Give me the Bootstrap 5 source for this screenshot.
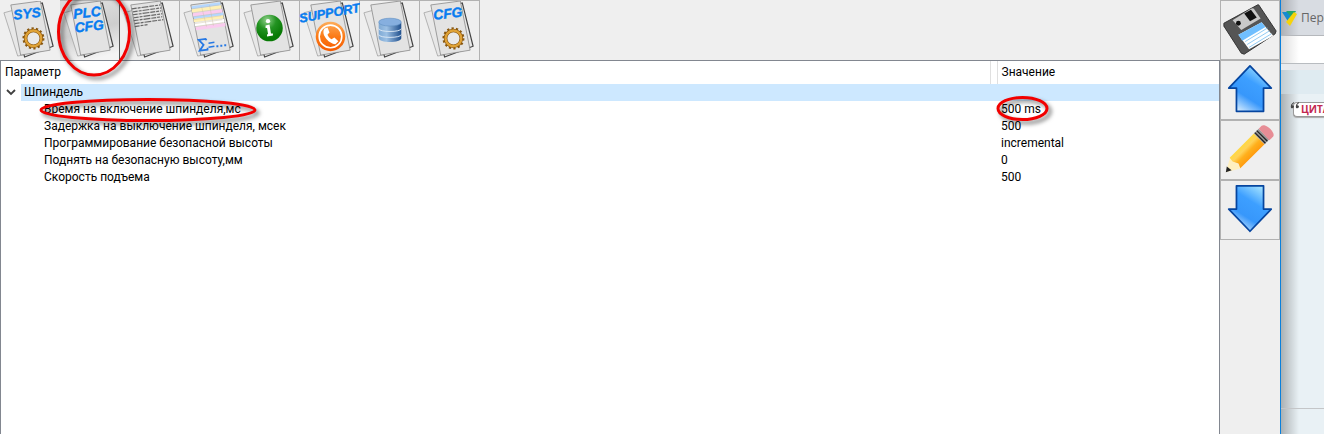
<!DOCTYPE html>
<html lang="ru">
<head>
<meta charset="utf-8">
<meta name="viewport" content="width=device-width, initial-scale=1">
<title>PLC CFG</title>
<link href="https://cdn.jsdelivr.net/npm/bootstrap@5.3.0/dist/css/bootstrap.min.css" rel="stylesheet">
<style>
body { font: 12px/17px Roboto, "Noto Sans", sans-serif; color: #000; background: #efefef; }
.tool { width: 60px; height: 60px; background: #efefef; border: 0 solid #b2b2b2; border-width: 1px 1px 0 0; border-radius: 0; }
.tool .pic { display: block; width: 100%; height: 100%; overflow: visible; }
.tool.active { background: linear-gradient(165deg, #dadada 20%, #cecece 50%, #f4f4f4 90%); border-color: #b2b2b2; border-right-color: #555; }
.side { width: 61px; border-right: 1px solid #0a80dc; }
.side .tool { border-width: 1px; }
.pane { background: #fff; border: 1px solid #828790; border-bottom: 0; }
.params { table-layout: fixed; color: #000; margin: 0; }
.params th, .params td { padding: 0; font-weight: 400; height: 17px; white-space: nowrap; }
.params thead th { height: 23px; padding-left: 4px; }
.params .val { width: 222px; padding-left: 4px; }
.params thead .val { border-left: 1px solid #e0e0e0; padding-left: 4px; }
.params .divider { width: 7px; padding: 0; }
.params thead .divider { border-left: 1px solid #e0e0e0; }
.params tbody .leaf { padding-left: 43px; }
.fold { width: 20px; height: 17px; }
.group-name { background: #cde8ff; padding-left: 3px; }
.group-fill { background: #cde8ff; }
.ring { position: absolute; fill: none; stroke: #f20000; stroke-width: 3; overflow: visible; pointer-events: none; filter: drop-shadow(3px 3px 2px #0008); z-index: 2; }
.ring-tool { left: -3px; top: -14px; width: 74px; height: 90px; }
.ring-name { left: 38px; top: -3px; width: 218px; height: 24px; }
.ring-val { left: -1px; top: -5px; width: 53px; height: 25px; }
.behind { width: 43px; background: linear-gradient(90deg, #0004, #0000 18px) #e9f1f5; }
.tabbar { height: 36px; border-bottom: 1px solid #b5b8bc; background: linear-gradient(90deg, #0003, #0000 18px) #d8dce2; color: #666; font: 12px "Open Sans", sans-serif; }
.address { height: 28px; background: linear-gradient(90deg, #0002, #0000 18px) #fff; border-bottom: 1px solid #b8bcc0; }
.strip { height: 30px; background: linear-gradient(90deg, #0002, #0000 18px) #dfebf1; border-top: 6px solid #e8eaed; }
.quote { font: bold 10px/13px "Open Sans", sans-serif; color: #c22850; text-decoration: none; white-space: nowrap; background: #fff; border: 1px solid #999; border-right: 0; border-radius: 4px 0 0 4px; box-shadow: 0 1px 1px #aaa; padding-left: 7px; margin-left: 12px; }
.post-end { height: 26px; border-top: 1px solid #c4c6c8; }
.word { font: italic bold 14px "Liberation Sans", sans-serif; fill: #087cf0; stroke: #087cf0; stroke-width: .4; }
.word-long { font-size: 13px; }
</style>
</head>
<body>
<svg width="0" height="0" class="position-absolute" aria-hidden="true">
  <defs>
    <linearGradient id="blueFill" x1=".15" y1="1" x2=".75" y2="0"><stop offset="0" stop-color="#e8f6ff"/><stop offset=".35" stop-color="#3797fb"/><stop offset=".65" stop-color="#3d9fff"/><stop offset="1" stop-color="#a6e4ff"/></linearGradient>
    <linearGradient id="orange" x2="0" y2="1"><stop stop-color="#fdad5c"/><stop offset=".5" stop-color="#fb7b18"/><stop offset="1" stop-color="#f65a00"/></linearGradient>
    <radialGradient id="green" cx=".4" cy=".2" r=".7"><stop stop-color="#8fd08a"/><stop offset=".5" stop-color="#239322"/><stop offset="1" stop-color="#087a05"/></radialGradient>
    <linearGradient id="steel"><stop stop-color="#7ea9d4"/><stop offset=".35" stop-color="#9cc0e4"/><stop offset="1" stop-color="#1f4f8d"/></linearGradient>
    <linearGradient id="wood" x1=".2" y1=".2" x2=".8" y2=".8"><stop stop-color="#ffe21f"/><stop offset=".4" stop-color="#ffd257"/><stop offset=".55" stop-color="#ffb01c"/><stop offset="1" stop-color="#ff8200"/></linearGradient>
    <symbol id="sheets" viewBox="0 0 60 60">
      <path d="M4 12 33 4 47 50 18 56Z" fill="#e8e8e8" stroke="#999" stroke-width=".7"/>
      <path d="M14 10 43 2 54 46 25 57Z" fill="#e8e8e8" stroke="#444" stroke-width="1.200"/>
      <path d="M11 4 41 0 51 50 21 55Z" fill="#e3e3e3" stroke="#888" stroke-width=".8"/>
    </symbol>
    <symbol id="gear" viewBox="0 0 24 24">
      <circle cx="12" cy="12" r="9.700" fill="none" stroke="#8a5a12" stroke-width="3" stroke-dasharray="2.200 2.150"/>
      <circle cx="12" cy="12" r="8" fill="#e9e9e9" stroke="#84500b" stroke-width="3.600"/>
      <circle cx="12" cy="12" r="8" fill="none" stroke="#dfa236" stroke-width="2.400"/>
    </symbol>
  </defs>
</svg>

<div class="d-flex vh-100 overflow-hidden">
  <main class="d-flex flex-column flex-grow-1">
    <nav class="d-flex" aria-label="Разделы">
      <button class="tool btn p-0" aria-label="SYS"><svg class="pic" viewBox="0 0 60 60"><use href="#sheets"/><text class="word" x="14" y="19" transform="rotate(-6 14 19)">SYS</text><use href="#gear" x="22" y="26" width="24" height="24"/></svg></button>
      <button class="tool btn p-0 active position-relative" aria-label="PLC CFG"><svg class="pic" viewBox="0 0 60 60"><use href="#sheets"/><g class="word" transform="rotate(-6 14 18)"><text x="14" y="18">PLC</text><text x="14" y="32">CFG</text></g></svg>
        <svg class="ring ring-tool" viewBox="0 0 74 90"><ellipse cx="37" cy="45" rx="35.500" ry="43"/></svg></button>
      <button class="tool btn p-0" aria-label="Журнал"><svg class="pic" viewBox="0 0 60 60"><use href="#sheets"/><g fill="none" stroke="#686868" stroke-width="1.200" stroke-dasharray="5 1 3 1 7 1"><path d="m12 8 29-4M13 11l29-4M13 14l29-4M14 17l29-4M14 20l29-4M15 23l29-4M15 26l13-2"/></g></svg></button>
      <button class="tool btn p-0" aria-label="Сумма"><svg class="pic" viewBox="0 0 60 60"><use href="#sheets"/><g stroke-width="3.300"><path d="m12 7 29-4M14 17l30-4" stroke="#b4d7ff"/><path d="m12 10 30-4M14 20l30-4" stroke="#fff0b5"/><path d="m13 14 30-4M16 28l30-4" stroke="#facbef"/><path d="m15 24 30-4" stroke="#fff"/></g><path d="m22 6 5 20m3-22 4 21M12 8l28-4M13 12l28-4M14 16l28-4M14 19l28-4M15 23l28-4M16 26l28-4" fill="none" stroke="#c9b9a0" stroke-width=".4"/><g fill="none" stroke="#2779e4"><path d="m27 40-1-1.500-7 1 5 5-4 6 8-1 0-2" stroke-width="1.800"/><path d="m29 43 6-1m-6 5 6-1" stroke-width="1.600"/><path d="m37 46 2 0m2-.5 2 0m2-.5 2 0" stroke-width="2"/></g></svg></button>
      <button class="tool btn p-0" aria-label="Информация"><svg class="pic" viewBox="0 0 60 60"><use href="#sheets"/><circle cx="30" cy="27.500" r="13.500" fill="url(#green)"/><circle cx="28.500" cy="20.500" r="2.200" fill="#fff"/><path d="m26 25 4-1 1.500 9 2 0v2l-6 1v-2l1-.5-1-6-1.500 0Z" fill="#fff"/></svg></button>
      <button class="tool btn p-0" aria-label="SUPPORT"><svg class="pic" viewBox="0 0 60 60"><use href="#sheets"/><circle cx="31" cy="36" r="15" fill="url(#orange)"/><circle cx="31" cy="36" r="11.500" fill="none" stroke="#fff" stroke-width="1.600"/><path d="M25 28c-4 5 3 15 11 16l3-3-4-4-3 2c-2-1-4-4-4-5l2-2-2-5Z" fill="#fff"/><text class="word word-long" x="0" y="22" transform="rotate(-10 0 22)">SUPPORT</text></svg></button>
      <button class="tool btn p-0" aria-label="База данных"><svg class="pic" viewBox="0 0 60 60"><use href="#sheets"/><path d="M19 22v16c0 5 23 5 23 0V22Z" fill="url(#steel)"/><ellipse cx="30.500" cy="21.500" rx="11.500" ry="4" fill="#86afdf" stroke="#5f8fc2" stroke-width=".6"/><path d="M19 28c0 4 23 4 23 0M19 34c0 4 23 4 23 0" fill="none" stroke="#d8e6f3" stroke-width="1"/></svg></button>
      <button class="tool btn p-0" aria-label="CFG"><svg class="pic" viewBox="0 0 60 60"><use href="#sheets"/><text class="word" x="14" y="19" transform="rotate(-6 14 19)">CFG</text><use href="#gear" x="22" y="26" width="24" height="24"/></svg></button>
    </nav>

    <section class="pane flex-grow-1">
      <table class="params w-100">
        <thead><tr><th scope="col">Параметр</th><th class="divider"></th><th class="val" scope="col">Значение</th></tr></thead>
        <tbody>
          <tr><td><div class="d-flex"><svg class="fold" viewBox="0 0 20 17"><path d="m6 6 4 4 4-4" fill="none" stroke="#404040" stroke-width="1.800"/></svg><span class="group-name flex-grow-1">Шпиндель</span></div></td><td class="divider group-fill"></td><td class="val group-fill"></td></tr>
          <tr><td class="leaf position-relative">Время на включение шпинделя,мс<svg class="ring ring-name" viewBox="0 0 218 24"><ellipse cx="109" cy="12" rx="107" ry="10.500"/></svg></td><td></td><td class="val position-relative">500 ms<svg class="ring ring-val" viewBox="0 0 53 25"><ellipse cx="26.500" cy="12.500" rx="24.500" ry="11"/></svg></td></tr>
          <tr><td class="leaf">Задержка на выключение шпинделя, мсек</td><td></td><td class="val">500</td></tr>
          <tr><td class="leaf">Программирование безопасной высоты</td><td></td><td class="val">incremental</td></tr>
          <tr><td class="leaf">Поднять на безопасную высоту,мм</td><td></td><td class="val">0</td></tr>
          <tr><td class="leaf">Скорость подъема</td><td></td><td class="val">500</td></tr>
        </tbody>
      </table>
    </section>
  </main>

  <aside class="side d-flex flex-column flex-shrink-0">
    <button class="tool btn p-0" aria-label="Сохранить"><svg class="pic" viewBox="0 0 60 60"><path d="m3 23 35-19 1 0 18 27-1 3-32 21-3-1L3 26Z" fill="#555" stroke="#333"/><path d="m12 20 19-12q2-1 3 0l7 10-20 12Z" fill="#c9c9c9"/><path d="m24 13 7-4 6 8-7 4Z" fill="#111"/><circle cx="18" cy="23" r="2.500" fill="#111"/><path d="m18 35 24-13 12 14-25 14Z" fill="#fff"/><path d="m18 35 24-13 4 5-24 14Z" fill="#70bfff"/><path d="m25 42 23-14m-21 17 23-14m-21 17 23-14" stroke="#8dc9f4" stroke-width="1"/></svg></button>
    <button class="tool btn p-0" aria-label="Вверх"><svg class="pic" viewBox="0 0 60 60"><path d="M30 5 52 28H44V52H16V28H8Z" fill="url(#blueFill)" stroke="#06459f" stroke-width="1.800" stroke-linejoin="round"/></svg></button>
    <button class="tool btn p-0" aria-label="Изменить"><svg class="pic" viewBox="0 0 60 60"><path d="m5 53 5-17 11 13Z" fill="#fff0bf"/><path d="m5 53 1-6 5 4Z" fill="#222"/><path d="M9 38 34 13 45 24 20 49 18 44 12 42Z" fill="url(#wood)"/><path d="m34 13 5-5 11 11-5 5Z" fill="#999"/><path d="m35 12 11 11m-9-13 11 11" stroke="#222" stroke-width="1.300"/><path d="m39 8 3-3c4-3 15 7 12 11l-4 4Z" fill="#e78d96"/></svg></button>
    <button class="tool btn p-0" aria-label="Вниз"><svg class="pic" viewBox="0 0 60 60"><path d="M16 5H44V29H52L30 52 8 29H16Z" fill="url(#blueFill)" stroke="#06459f" stroke-width="1.800" stroke-linejoin="round"/></svg></button>
  </aside>

  <aside class="behind d-flex flex-column flex-shrink-0 overflow-hidden">
    <div class="tabbar d-flex align-items-center"><svg class="flex-shrink-0" width="20" height="32" viewBox="0 0 20 32"><path d="m1 10 6 0 4 6-3 5Z" fill="#168bd0"/><path d="M5 9h10l-4 7Z" fill="#24a66c"/><path d="m13 10 3 2-7 12-4-4Z" fill="#f6d30a"/></svg><span>Пере</span></div>
    <div class="address"></div>
    <div class="strip"></div>
    <div class="d-flex position-relative pt-2"><svg class="position-absolute z-1 ms-2" width="12" height="16" viewBox="8 0 12 16"><path d="M13 0q-4 2-3 6 3 1 3-2l-2-1 2-2m5-1q-4 2-3 6 3 1 3-2l-2-1 2-2" fill="#444"/></svg><a class="quote flex-grow-1" href="#">ЦИТА</a></div>
    <div class="post-end mt-auto"></div>
  </aside>
</div>
<script src="https://cdn.jsdelivr.net/npm/bootstrap@5.3.0/dist/js/bootstrap.bundle.min.js"></script>
</body>
</html>
